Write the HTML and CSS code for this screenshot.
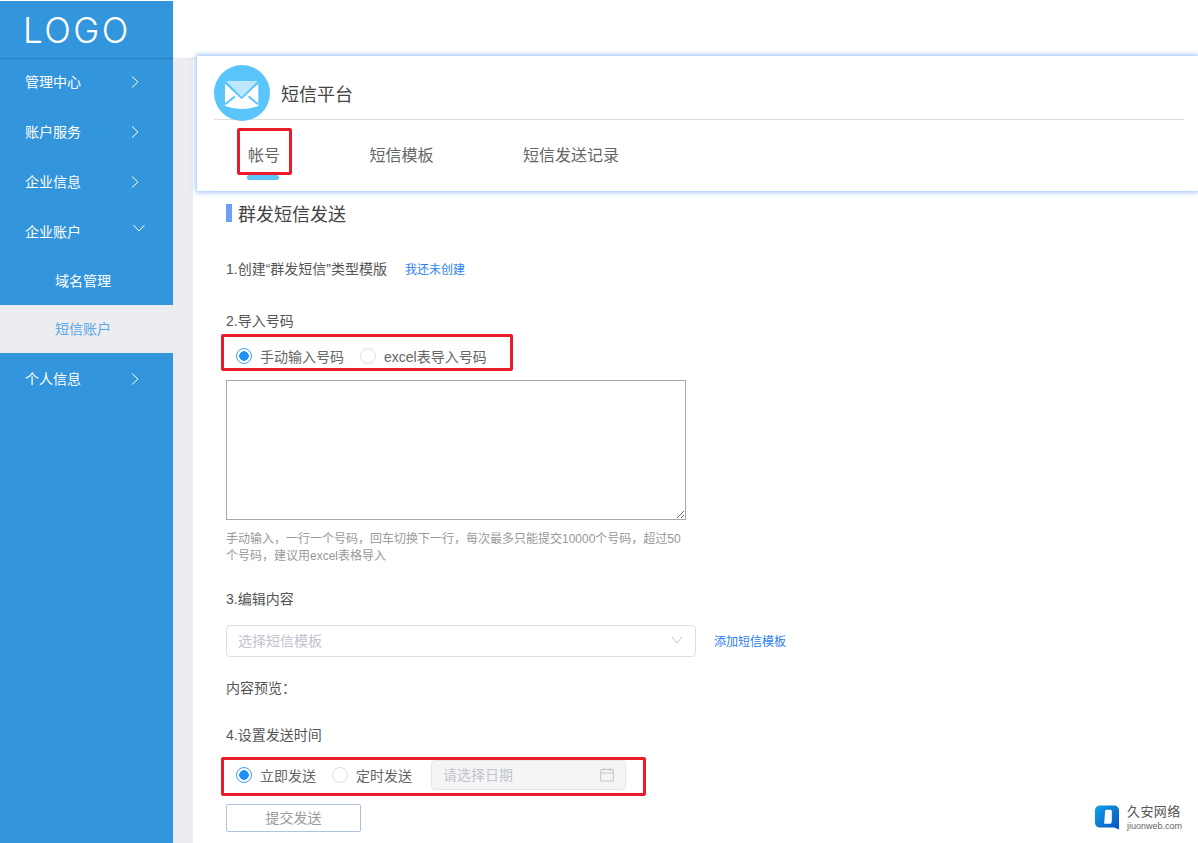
FILE: index.html
```html
<!DOCTYPE html>
<html lang="zh-CN">
<head>
<meta charset="utf-8">
<title>短信平台</title>
<link rel="stylesheet" href="styles.css">
</head>
<body>
<div class="app">
  <aside class="sidebar">
    <div class="logo">LOGO</div>
    <nav class="menu">
      <a class="menu-item">管理中心<svg class="chev" viewBox="0 0 10 14"><path d="M2 1.5 8 7l-6 5.5"/></svg></a>
      <a class="menu-item">账户服务<svg class="chev" viewBox="0 0 10 14"><path d="M2 1.5 8 7l-6 5.5"/></svg></a>
      <a class="menu-item">企业信息<svg class="chev" viewBox="0 0 10 14"><path d="M2 1.5 8 7l-6 5.5"/></svg></a>
      <a class="menu-item open">企业账户<svg class="chev-down" viewBox="0 0 14 10"><path d="M1.5 2 7 8l5.5-6"/></svg></a>
      <a class="menu-sub">域名管理</a>
      <a class="menu-sub active">短信账户</a>
      <a class="menu-item last">个人信息<svg class="chev" viewBox="0 0 10 14"><path d="M2 1.5 8 7l-6 5.5"/></svg></a>
    </nav>
  </aside>
  <main class="main">
    <div class="topbar"></div>
    <div class="body">
      <section class="card">
        <div class="card-head">
          <svg class="mail" viewBox="0 0 56 56">
            <circle cx="28" cy="28" r="28" fill="#5ac5fb"/>
            <path d="M12 16H43.700L27.700 32z" fill="#bce8fe"/>
            <path d="M11 18.700 27.700 34.300 44.300 18.700V41Q27.700 47 11 41z" fill="#fff"/>
            <path d="M12 38.700 20 32M43.300 38.700 35.300 32" stroke="#5ac5fb" stroke-width="2" stroke-linecap="round" fill="none"/>
          </svg>
          <h1 class="card-title">短信平台</h1>
        </div>
        <div class="tabs">
          <div class="tab current">帐号<span class="annot annot-tab"></span></div>
          <div class="tab">短信模板</div>
          <div class="tab">短信发送记录</div>
        </div>
      </section>
      <section class="content">
        <h2 class="heading">群发短信发送</h2>
        <div class="step step-1">1.创建“群发短信”类型模版<a class="link link-1">我还未创建</a></div>
        <div class="step step-2">2.导入号码</div>
        <div class="radios radios-num">
          <label class="radio on"><i></i>手动输入号码</label>
          <label class="radio"><i></i>excel表导入号码</label>
          <span class="annot annot-num"></span>
        </div>
        <textarea class="numbers"></textarea>
        <p class="hint">手动输入，一行一个号码，回车切换下一行，每次最多只能提交10000个号码，超过50个号码，建议用excel表格导入</p>
        <div class="step step-3">3.编辑内容</div>
        <div class="select-row">
          <div class="select">选择短信模板<svg class="select-arrow" viewBox="0 0 12 8"><path d="M1 1l5 6 5-6"/></svg></div>
          <a class="link link-add">添加短信模板</a>
        </div>
        <div class="step step-preview">内容预览：</div>
        <div class="step step-4">4.设置发送时间</div>
        <div class="radios radios-time">
          <label class="radio on"><i></i>立即发送</label>
          <label class="radio"><i></i>定时发送</label>
          <div class="date">请选择日期
            <svg class="cal" viewBox="0 0 16 16"><path d="M1.700 3.500h12.600V15H1.700zM1.700 7h12.600M5 2v3M11 2v3"/></svg>
          </div>
          <span class="annot annot-time"></span>
        </div>
        <button class="submit" type="button">提交发送</button>
      </section>
    </div>
  </main>
</div>
<div class="watermark">
  <svg class="wm-icon" viewBox="0 0 26 26">
    <defs><linearGradient id="wm" x1="0" y1="0" x2="1" y2="1"><stop offset="0" stop-color="#0ba5e8"/><stop offset="1" stop-color="#0a4fc0"/></linearGradient></defs>
    <path d="M5 0h15a5 5 0 0 1 5 5v20l-5-2H5a5 5 0 0 1-5-5V5a5 5 0 0 1 5-5z" fill="url(#wm)"/>
    <path d="M12 4.500h4a1.500 1.500 0 0 1 1.500 1.500V16a3 3 0 0 1-3 3H9.500L10.500 6A1.500 1.500 0 0 1 12 4.500z" fill="#fff"/>
  </svg>
  <div class="wm-text"><span class="wm-cn">久安网络</span><span class="wm-en">jiuonweb.com</span></div>
</div>
</body>
</html>
```
FILE: styles.css
```css
* { box-sizing: border-box; }
html, body { margin: 0; height: 843px; overflow: hidden; background: #fff; }
body { font-family: "Liberation Sans", "Noto Sans CJK SC", sans-serif; font-size: 14px; color: #555; }
.app { display: flex; height: 843px; }

.sidebar { width: 173px; flex: none; margin-top: 1px; background: #3395db; color: #fff; }
.logo { height: 57px; padding-left: 23px; font: 300 35px/59px Inter, "Liberation Sans", sans-serif; letter-spacing: 2.5px; box-shadow: 0 1px 1px rgba(0,0,0,.15); }
.menu { display: flex; flex-direction: column; }
.menu-item { position: relative; height: 50px; line-height: 49px; padding-left: 25px; border-bottom: 1px solid #3290d5; font-size: 14px; }
.menu-item.open { height: 49px; line-height: 48px; }
.menu-sub { height: 48px; line-height: 48px; padding-left: 55px; }
.menu-sub.active { background: #ecedf0; color: #5aa6e6; }
.menu-item.last { line-height: 52px; }
.chev, .chev-down { position: absolute; fill: none; stroke: #fff; stroke-width: 1; }
.chev { left: 130px; top: 17px; width: 10px; height: 14px; }
.chev-down { left: 132px; top: 15px; width: 14px; height: 10px; }
.last .chev { top: 19px; }

.main { flex: 1; min-width: 0; display: flex; flex-direction: column; }
.topbar { height: 58px; flex: none; }
.body { flex: 1; border-left: 20px solid #ecedf0; border-top: 1px solid #e2e2e4; }

.card { position: relative; margin: -3px 0 0 4px; height: 135px; background: #fff; box-shadow: 0 0 5px 1px rgba(70,140,240,.6); padding: 9px 14px 0 17px; }
.card-head { display: flex; align-items: flex-start; height: 55px; border-bottom: 1px solid #ddd; }
.mail { width: 56px; height: 56px; flex: none; }
.card-title { margin: 15px 0 0 11px; font-size: 18px; line-height: 30px; font-weight: 400; color: #444; }
.tabs { display: flex; gap: 89.500px; padding-left: 34px; }
.tab { position: relative; font-size: 16px; line-height: 22px; margin-top: 25px; color: #666; }
.tab.current::after { content: ""; position: absolute; left: -1px; top: 30px; width: 32px; height: 5px; border-radius: 3px; background: #5ac5fb; }

.annot { position: absolute; border: 3px solid #ea1c2c; border-radius: 2px; pointer-events: none; }
.annot-tab { left: -11px; top: -17px; width: 55px; height: 47px; }
.annot-num { left: -5px; top: -12px; width: 292px; height: 37px; }
.annot-time { left: -5px; top: -3px; width: 425px; height: 39px; }

.content { padding: 11px 0 0 33px; }
.heading { margin: 0; position: relative; font-size: 18px; line-height: 26px; font-weight: 400; color: #444; padding-left: 12px; }
.heading::before { content: ""; position: absolute; left: 0; top: 2px; width: 6px; height: 18px; background: #6b9ef8; }
.step { line-height: 20px; color: #555; }
.step-1 { margin-top: 31px; }
.step-2 { margin-top: 31px; }
.step-3 { margin-top: 24px; }
.step-preview { margin-top: 21px; }
.step-4 { margin-top: 27px; }
.link { font-size: 12px; color: #2a80f0; line-height: 20px; }
.link-1 { margin-left: 18px; }
.link-add { padding-top: 2px; }

.radios { position: relative; display: flex; align-items: center; }
.radios-num { margin-top: 15px; height: 20px; padding-left: 10px; gap: 16px; }
.radios-time { margin-top: 15px; height: 30px; padding-left: 10px; gap: 16px; }
.radio { display: flex; align-items: center; gap: 8px; color: #666; }
.radio i { width: 16px; height: 16px; border-radius: 50%; border: 1px solid #dcdfe6; background: #fff; flex: none; }
.radio.on i { border-color: #409eff; background: radial-gradient(circle, #1f8ffa 0 4.500px, #fff 5px); }

.numbers { display: block; margin: 14px 0 0; width: 460px; height: 140px; border: 1px solid #a9a9a9; background: #fff; padding: 2px; font: inherit; }
.hint { margin: 11px 0 0; width: 460px; font-size: 12px; line-height: 17px; color: #999; }

.select-row { display: flex; align-items: center; gap: 18px; margin-top: 16px; }
.select { position: relative; width: 470px; height: 32px; border: 1px solid #dcdfe6; border-radius: 4px; line-height: 30px; padding-left: 11px; color: #c0c4cc; }
.select-arrow { position: absolute; right: 12px; top: 10px; width: 12px; height: 8px; fill: none; stroke: #c0c4cc; stroke-width: 1; }

.date { position: relative; margin-left: 3px; width: 195px; height: 30px; background: #f5f5f5; border: 1px solid #e4e7ed; border-radius: 4px; line-height: 28px; padding-left: 11px; color: #c0c4cc; }
.cal { position: absolute; right: 10px; top: 5px; width: 16px; height: 16px; fill: none; stroke: #c0c4cc; stroke-width: 1; }

.submit { display: block; margin-top: 14px; width: 135px; height: 28px; background: #fff; border: 1px solid #b0c0dd; border-radius: 2px; font: inherit; line-height: 26px; padding: 0; color: #999; }

.watermark { position: absolute; right: 0; bottom: 0; width: 118px; height: 53px; background: #fff; display: flex; align-items: flex-start; gap: 7px; padding: 15px 0 0 15px; }
.wm-icon { width: 25px; height: 26px; flex: none; }
.wm-text { display: flex; flex-direction: column; margin-top: -1px; }
.wm-cn { font-size: 13px; line-height: 16px; color: #555; letter-spacing: .4px; }
.wm-en { font: 9px/12px "Liberation Sans", sans-serif; color: #666; }
```
